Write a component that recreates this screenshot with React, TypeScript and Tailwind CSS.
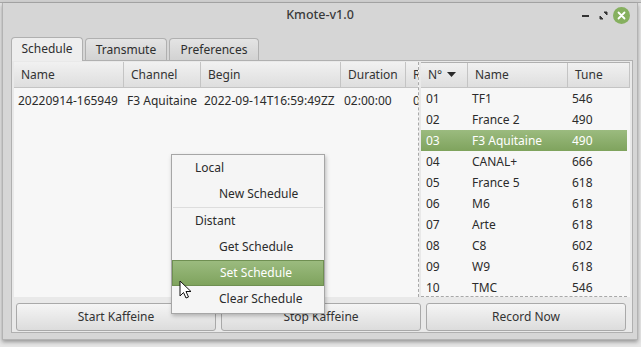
import React from 'react';

const font = { fontFamily: '"Noto Sans", "Open Sans", sans-serif' };

const schedule = [
  { name: '20220914-165949', channel: 'F3 Aquitaine', begin: '2022-09-14T16:59:49ZZ', duration: '02:00:00', r: '0' },
];

const channels = [
  ['01', 'TF1', '546'],
  ['02', 'France 2', '490'],
  ['03', 'F3 Aquitaine', '490'],
  ['04', 'CANAL+', '666'],
  ['05', 'France 5', '618'],
  ['06', 'M6', '618'],
  ['07', 'Arte', '618'],
  ['08', 'C8', '602'],
  ['09', 'W9', '618'],
  ['10', 'TMC', '546'],
];

const HeaderCell: React.FC<{ w: string; children: React.ReactNode }> = ({ w, children }) => (
  <div className={`${w} h-full flex items-center pl-[7px] border-r border-[#c4c4c4] bg-gradient-to-b from-[#f1f1f1] to-[#dedede] shrink-0 overflow-hidden whitespace-nowrap`}>
    {children}
  </div>
);

const App: React.FC = () => {
  return (
    <div className="w-[641px] h-[347px] bg-[#e6e6e6] relative overflow-hidden text-[12px] text-[#333]" style={font}>
      {/* other window behind */}
      <div className="h-[3px] bg-[#cfcfcf] border-b border-[#a9a9a9]" />

      {/* Window */}
      <div className="mx-[2px] w-[636px] h-[337px] bg-[#d6d6d6] border border-[#b3b3b3] border-t-0 shadow-[0_2px_4px_rgba(0,0,0,0.35)] flex flex-col">
        {/* Title bar */}
        <div className="h-[25px] flex items-center relative">
          <div className="flex-1 text-center text-[12.5px] text-[#3a3a3a] font-medium">Kmote-v1.0</div>
          <div className="absolute left-[578px] top-[4px] flex items-center">
            <div className="w-[8px] h-[8px] flex items-center justify-center">
              <div className="w-[7px] h-[2px] bg-[#333]" />
            </div>
            <svg width="9" height="9" viewBox="0 0 9 9" className="ml-[10px]">
              <path d="M5 1h3v3z M4 8H1V5z" fill="#333" stroke="#333" strokeWidth="1" />
            </svg>
            <div className="w-[17px] h-[17px] rounded-full bg-[#86b05f] flex items-center justify-center ml-[5px]">
              <svg width="9" height="9" viewBox="0 0 9 9">
                <path d="M1.5 1.5l6 6M7.5 1.5l-6 6" stroke="#fff" strokeWidth="1.8" strokeLinecap="round" />
              </svg>
            </div>
          </div>
        </div>

        {/* Tabs */}
        <div className="mt-[8px] ml-[8px] flex items-end h-[24px]">
          <div className="w-[72px] h-[24px] bg-[#eeeeee] border border-[#b0b0b0] border-b-0 rounded-t-[4px] flex items-center justify-center text-[#2e2e2e] relative z-10 -mb-px pb-px">Schedule</div>
          <div className="ml-[2px] w-[82px] h-[22px] bg-gradient-to-b from-[#e4e4e4] to-[#d2d2d2] border border-[#b0b0b0] border-b-0 rounded-t-[4px] flex items-center justify-center text-[#2e2e2e]">Transmute</div>
          <div className="ml-[2px] w-[90px] h-[22px] bg-gradient-to-b from-[#e4e4e4] to-[#d2d2d2] border border-[#b0b0b0] border-b-0 rounded-t-[4px] flex items-center justify-center text-[#2e2e2e]">Preferences</div>
        </div>

        {/* Panel */}
        <div className="ml-[8px] w-[622px] h-[273px] bg-[#e9e9e9] border border-[#b0b0b0] flex flex-col px-[2px] pt-[1px]">
          <div className="flex h-[235px] gap-[2px]">
            {/* Left table */}
            <div className="w-[405px] h-full bg-[#f7f7f7] border-r border-dashed border-[#a8a8a8] flex flex-col overflow-hidden">
              <div className="h-[26px] flex border-b border-[#c4c4c4] text-[#333]">
                <HeaderCell w="w-[110px]">Name</HeaderCell>
                <HeaderCell w="w-[77px]">Channel</HeaderCell>
                <HeaderCell w="w-[140px]">Begin</HeaderCell>
                <HeaderCell w="w-[65px]">Duration</HeaderCell>
                <HeaderCell w="w-[20px]">R</HeaderCell>
              </div>
              {schedule.map(s => (
                <div key={s.name} className="h-[22px] mt-[2px] flex items-center whitespace-nowrap text-[#2b2b2b]">
                  <div className="w-[110px] pl-[4px] shrink-0">{s.name}</div>
                  <div className="w-[77px] pl-[3px] shrink-0">{s.channel}</div>
                  <div className="w-[140px] pl-[3px] shrink-0">{s.begin}</div>
                  <div className="w-[65px] pl-[3px] shrink-0">{s.duration}</div>
                  <div className="w-[20px] pl-[7px] shrink-0">{s.r}</div>
                </div>
              ))}
            </div>

            {/* Right table */}
            <div className="w-[209px] h-full bg-[#f7f7f7] flex flex-col overflow-hidden">
              <div className="h-[26px] flex border-b border-[#c4c4c4] border-t border-t-[#b0b0b0]">
                <HeaderCell w="w-[47px]">
                  N°
                  <svg width="9" height="6" viewBox="0 0 9 6" className="ml-[5px]">
                    <path d="M0 0h9L4.5 5z" fill="#2a2a2a" />
                  </svg>
                </HeaderCell>
                <HeaderCell w="w-[100px]">Name</HeaderCell>
                <HeaderCell w="w-[62px]">Tune</HeaderCell>
              </div>
              <div className="flex-1 border-b border-dashed border-[#a8a8a8] overflow-hidden mr-[3px]">
                {channels.map(([n, name, tune]) => {
                  const sel = n === '03';
                  return (
                    <div
                      key={n}
                      className={`h-[21px] flex items-center whitespace-nowrap ${sel ? 'bg-gradient-to-b from-[#9bbb7f] to-[#7fa35d] text-white' : 'text-[#2b2b2b]'}`}
                    >
                      <div className="w-[47px] pl-[5px] shrink-0">{n}</div>
                      <div className="w-[100px] pl-[4px] shrink-0">{name}</div>
                      <div className="pl-[4px]">{tune}</div>
                    </div>
                  );
                })}
              </div>
            </div>
          </div>

          {/* Buttons */}
          <div className="mt-[6px] flex gap-[5px] px-[2px]">
            {['Start Kaffeine', 'Stop Kaffeine', 'Record Now'].map(b => (
              <button
                key={b}
                className="w-[200px] h-[28px] rounded-[3px] border border-[#a9a9a9] bg-gradient-to-b from-[#f5f5f5] to-[#dcdcdc] text-[#333] flex items-center justify-center"
              >
                {b}
              </button>
            ))}
          </div>
        </div>
      </div>

      {/* Context menu */}
      <div className="absolute left-[171px] top-[154px] w-[154px] h-[160px] bg-[#f5f5f5] border border-[#a6a6a6] shadow-[1px_2px_4px_rgba(0,0,0,0.25)] text-[#2b2b2b]">
        <div className="h-[26px] flex items-center pl-[23px]">Local</div>
        <div className="h-[26px] flex items-center pl-[47px]">New Schedule</div>
        <div className="h-px bg-[#dddddd] mx-px" />
        <div className="h-[26px] flex items-center pl-[23px]">Distant</div>
        <div className="h-[26px] flex items-center pl-[47px]">Get Schedule</div>
        <div className="h-[26px] flex items-center pl-[47px] bg-gradient-to-b from-[#9bbb7f] to-[#7fa35d] text-white border border-[#6f8f52]">Set Schedule</div>
        <div className="h-[26px] flex items-center pl-[47px]">Clear Schedule</div>
      </div>

      {/* Mouse cursor */}
      <svg className="absolute left-[179px] top-[280px]" width="14" height="20" viewBox="0 0 14 20">
        <path d="M1 1v15l3.5-3.5 2.5 5.5 2.5-1-2.5-5.5h5z" fill="#fff" stroke="#111" strokeWidth="1" strokeLinejoin="round" />
      </svg>
    </div>
  );
};

export default App;
